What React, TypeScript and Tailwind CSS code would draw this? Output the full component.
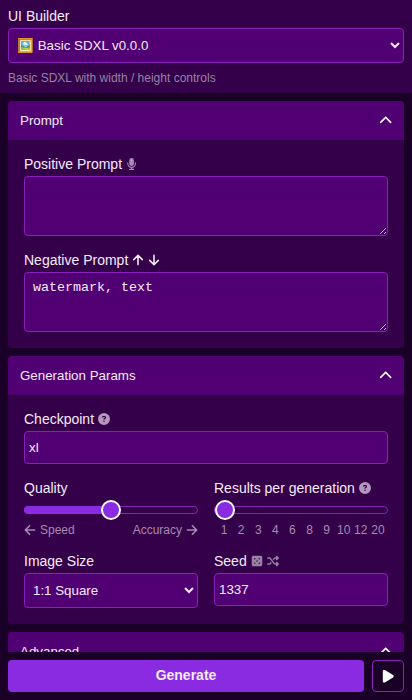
import React from "react";
import {
  FaChevronUp,
  FaCircleQuestion,
  FaDiceFive,
  FaMicrophone,
  FaPlay,
  FaShuffle,
} from "react-icons/fa6";

const field =
  "block w-full rounded border border-[#8a20bb] bg-[#500073] text-[13.333px] text-[#f4ebf8] outline-none";

function Arrow({ className = "" }: { className?: string }) {
  return (
    <svg
      viewBox="0 0 12 12"
      className={`size-3 fill-none stroke-current stroke-[1.6] ${className}`}
      strokeLinecap="round"
      strokeLinejoin="round"
    >
      <path d="M6 10.6V1.4M1.7 5.6 6 1.3l4.3 4.3" />
    </svg>
  );
}

function Label({ children }: { children: React.ReactNode }) {
  return (
    <div className="mb-1 flex h-4 items-center gap-1 whitespace-nowrap text-sm leading-4">
      {children}
    </div>
  );
}

function Section({ title, children }: { title: string; children?: React.ReactNode }) {
  return (
    <section className="shrink-0 overflow-hidden rounded bg-[#340049]">
      <header className="flex h-[39px] items-center justify-between bg-[#500073] px-3 text-[13.333px]">
        <span>{title}</span>
        <FaChevronUp className="size-[13.333px] text-white" />
      </header>
      {children}
    </section>
  );
}

function Slider({ position }: { position: string }) {
  return (
    <div className="relative mt-[10px] h-2 rounded-full border border-[#8a20bb]">
      <div
        className="absolute -left-px -top-px h-2 rounded-l-full bg-[#8a2be2]"
        style={{ width: position }}
      />
      <div
        className="absolute -top-[7px] size-5 -translate-x-1/2 rounded-full border-2 border-white bg-[#8a2be2]"
        style={{ left: position }}
      />
    </div>
  );
}

const counts = [1, 2, 3, 4, 6, 8, 9, 10, 12, 20];

export default function App() {
  return (
    <div className="flex h-[700px] w-[412px] flex-col overflow-hidden bg-[#1a0027] font-['Liberation_Sans',Arial,sans-serif] text-[#f4ebf8]">
      <div className="h-[93px] shrink-0 bg-[#340049] px-2 pt-2">
        <Label>UI Builder</Label>
        <select className={`${field} h-[35px] px-1`}>
          <option>🖼️ Basic SDXL v0.0.0</option>
        </select>
        <p className="mt-2 text-xs leading-[14px] text-[#9a80a4]">
          Basic SDXL with width / height controls
        </p>
      </div>

      <main className="flex min-h-0 flex-1 flex-col gap-2 overflow-hidden px-2 pt-2">
        <Section title="Prompt">
          <div className="flex flex-col gap-4 p-4">
            <div>
              <Label>
                Positive Prompt
                <svg viewBox="0 0 10 12" className="ml-px h-3 w-[10px] text-[#a88bb2]">
                  <rect x="2.3" y="0" width="4.6" height="8" rx="2.3" className="fill-current" />
                  <path
                    d="M.8 4.8v.8a3.8 3.8 0 0 0 7.6 0v-.8M4.6 9.6v1.6M2.6 11.4h4"
                    className="fill-none stroke-current stroke-[1.1]"
                    strokeLinecap="round"
                  />
                </svg>
              </Label>
              <textarea className={`${field} h-[60px] resize p-2`} />
            </div>
            <div>
              <Label>
                Negative Prompt
                <Arrow />
                <Arrow className="rotate-180" />
              </Label>
              <textarea
                className={`${field} h-[60px] resize px-2 py-[7px] font-['Liberation_Mono',monospace] leading-[15px]`}
                defaultValue="watermark, text"
              />
            </div>
          </div>
        </Section>

        <Section title="Generation Params">
          <div className="p-4">
            <Label>
              Checkpoint
              <FaCircleQuestion className="size-3 text-[#b397bd]" />
            </Label>
            <input className={`${field} h-[33px] px-1`} defaultValue="xl" />
            <div className="mt-4 grid grid-cols-2 gap-x-4">
              <div className="h-[73px]">
                <Label>Quality</Label>
                <Slider position="50%" />
                <div className="mt-[9px] flex justify-between text-xs leading-[14px] text-[#a88bb2]">
                  <span className="flex items-center gap-1">
                    <Arrow className="-rotate-90" />
                    Speed
                  </span>
                  <span className="flex items-center gap-1">
                    Accuracy
                    <Arrow className="rotate-90" />
                  </span>
                </div>
              </div>
              <div className="h-[73px]">
                <Label>
                  Results per generation
                  <FaCircleQuestion className="size-3 text-[#b397bd]" />
                </Label>
                <Slider position="10px" />
                <div className="mt-[9px] flex px-[1.5px] text-xs leading-[14px] text-[#a88bb2]">
                  {counts.map((n) => (
                    <span key={n} className="flex flex-1 justify-center">
                      {n}
                    </span>
                  ))}
                </div>
              </div>
              <div>
                <Label>Image Size</Label>
                <select className={`${field} h-[35px] px-1`}>
                  <option>1:1 Square</option>
                </select>
              </div>
              <div>
                <Label>
                  Seed
                  <FaDiceFive className="size-3 text-[#9a80a4]" />
                  <FaShuffle className="size-3 text-[#9a80a4]" />
                </Label>
                <input className={`${field} h-[33px] px-1`} defaultValue="1337" />
              </div>
            </div>
          </div>
        </Section>

        <Section title="Advanced" />
      </main>

      <footer className="flex h-12 shrink-0 gap-2 p-2">
        <button className="flex h-8 flex-1 items-start justify-center rounded bg-[#8a2be2] pt-[7px] text-sm font-bold leading-4">
          Generate
        </button>
        <button className="flex size-8 items-center justify-center rounded border border-[#8a20bb] text-white">
          <FaPlay className="h-[14.5px] w-auto" />
        </button>
      </footer>
    </div>
  );
}
